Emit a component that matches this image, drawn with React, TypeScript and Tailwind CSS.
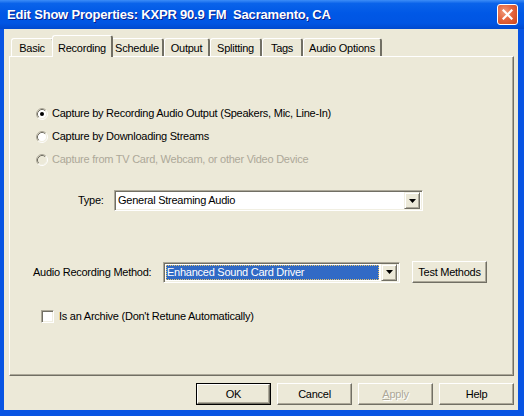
import React from "react";

function Radio({ checked, disabled }: { checked?: boolean; disabled?: boolean }) {
  return (
    <svg width="12" height="12" viewBox="0 0 12 12" className="shrink-0">
      <circle cx="6" cy="6" r="4.5" fill={disabled ? "#ECE9D8" : "#FFFFFF"} />
      <path d="M2.11 9.89 A5.5 5.5 0 0 1 9.89 2.11" stroke="#ACA899" strokeWidth="1" fill="none" />
      <path d="M9.89 2.11 A5.5 5.5 0 0 1 2.11 9.89" stroke="#FFFFFF" strokeWidth="1" fill="none" />
      <path d="M2.82 9.18 A4.5 4.5 0 0 1 9.18 2.82" stroke="#716F64" strokeWidth="1" fill="none" />
      <path d="M9.18 2.82 A4.5 4.5 0 0 1 2.82 9.18" stroke="#F1EFE2" strokeWidth="1" fill="none" />
      {checked && <circle cx="6" cy="6" r="2" fill="#000000" />}
    </svg>
  );
}

function Arrow() {
  return (
    <div className="w-[16px] h-[17px] bg-[#ECE9D8] border border-t-[#F1EFE2] border-l-[#F1EFE2] border-r-[#716F64] border-b-[#716F64] shadow-[inset_1px_1px_0_#FFFFFF,inset_-1px_-1px_0_#ACA899] flex items-center justify-center">
      <svg width="7" height="4" viewBox="0 0 7 4">
        <path d="M0 0 H7 L3.5 4 Z" fill="#000" />
      </svg>
    </div>
  );
}

function Btn({ label, def, disabled, w = "w-[75px]" }: { label: React.ReactNode; def?: boolean; disabled?: boolean; w?: string }) {
  const inner = (
    <div className="h-full w-full bg-[#ECE9D8] border border-t-white border-l-white border-r-[#716F64] border-b-[#716F64] shadow-[inset_-1px_-1px_0_#ACA899] flex items-center justify-center">
      <span className={disabled ? "text-[#ACA899] [text-shadow:1px_1px_0_#fff]" : "text-black"}>{label}</span>
    </div>
  );
  return def ? (
    <div className={`${w} h-[22px] border border-black`}>{inner}</div>
  ) : (
    <div className={`${w} h-[22px]`}>{inner}</div>
  );
}

const tabs = [
  { label: "Basic", w: "w-[43px]" },
  { label: "Recording", w: "w-[61px]", sel: true },
  { label: "Schedule", w: "w-[53px]" },
  { label: "Output", w: "w-[46px]" },
  { label: "Splitting", w: "w-[52px]" },
  { label: "Tags", w: "w-[41px]" },
  { label: "Audio Options", w: "w-[79px]" },
];

export default function App() {
  return (
    <div className="w-[524px] h-[416px] bg-[#0854E3] flex flex-col font-['Liberation_Sans',Arial,sans-serif] text-[11px] tracking-[-0.25px] text-black overflow-hidden select-none">
      {/* Title bar */}
      <div className="h-[29px] shrink-0 flex items-center pl-[7px] pr-[6px] bg-[linear-gradient(to_bottom,#3D8DF7_0%,#0A63EA_12%,#0058E6_45%,#0055E3_80%,#0049CF_100%)]">
        <span className="text-white font-bold text-[13px] tracking-[-0.2px] [text-shadow:1px_1px_0_#0A1E8C] whitespace-pre">
          Edit Show Properties: KXPR 90.9 FM  Sacramento, CA
        </span>
        <div className="ml-auto w-[21px] h-[21px] rounded-[3px] border border-white bg-[radial-gradient(circle_at_35%_35%,#F09A7A_0%,#E4653F_45%,#CC4419_100%)] flex items-center justify-center">
          <svg width="11" height="11" viewBox="0 0 11 11">
            <path d="M1.5 1.5 L9.5 9.5 M9.5 1.5 L1.5 9.5" stroke="#FFFFFF" strokeWidth="2.2" strokeLinecap="square" />
          </svg>
        </div>
      </div>

      {/* Body */}
      <div className="flex-1 ml-[4px] mr-[6px] mb-[6px] bg-[#ECE9D8] flex flex-col">
        {/* Tabs */}
        <div className="h-[27px] pt-[6px] pl-[5px] flex items-end">
          <div className="w-[2px]" />
          {tabs.map((t) =>
            t.sel ? (
              <div
                key={t.label}
                className={`${t.w} h-[22px] -mb-px relative z-10 -ml-[2px] -mr-[2px] bg-[#ECE9D8] border-l border-t border-white border-r-2 border-r-[#716F64] rounded-t-[3px] flex justify-center pt-[4px]`}
              >
                {t.label}
              </div>
            ) : (
              <div
                key={t.label}
                className={`${t.w} h-[18px] bg-[#ECE9D8] border-l border-t border-white border-r-2 border-r-[#716F64] rounded-t-[3px] flex items-center justify-center pt-[1px]`}
              >
                {t.label}
              </div>
            )
          )}
        </div>

        {/* Panel */}
        <div className="h-[320px] ml-[5px] mr-[4px] border border-t-white border-l-white border-r-[#716F64] border-b-[#716F64] shadow-[inset_-1px_-1px_0_#ACA899] flex flex-col">
          <div className="h-[45px]" />
          <div className="flex flex-col pl-[26px]">
            <div className="h-[23px] flex items-center gap-[4px]">
              <Radio checked />
              <span>Capture by Recording Audio Output (Speakers, Mic, Line-In)</span>
            </div>
            <div className="h-[23px] flex items-center gap-[4px]">
              <Radio />
              <span>Capture by Downloading Streams</span>
            </div>
            <div className="h-[23px] flex items-center gap-[4px]">
              <Radio disabled />
              <span className="text-[#ACA899]">Capture from TV Card, Webcam, or other Video Device</span>
            </div>
          </div>

          <div className="mt-[19px] flex items-center pl-[68px]">
            <span className="w-[36px]">Type:</span>
            <div className="w-[309px] h-[21px] bg-white border border-t-[#ACA899] border-l-[#ACA899] border-r-white border-b-white shadow-[inset_1px_1px_0_#716F64,inset_-1px_-1px_0_#F1EFE2] flex items-center pl-[3px] pr-[2px]">
              <span className="flex-1">General Streaming Audio</span>
              <Arrow />
            </div>
          </div>

          <div className="mt-[50px] flex items-center pl-[23px]">
            <span className="w-[130px]">Audio Recording Method:</span>
            <div className="w-[237px] h-[21px] bg-white border border-t-[#ACA899] border-l-[#ACA899] border-r-white border-b-white shadow-[inset_1px_1px_0_#716F64,inset_-1px_-1px_0_#F1EFE2] flex items-center pl-[2px] pr-[2px] gap-[2px]">
              <div className="flex-1 h-[15px] bg-[#316AC5] text-white outline outline-1 outline-dotted outline-[#E6C36A] -outline-offset-1 flex items-center pl-[1px]">
                Enhanced Sound Card Driver
              </div>
              <Arrow />
            </div>
            <div className="ml-[12px]">
              <Btn label="Test Methods" />
            </div>
          </div>

          <div className="mt-[25px] flex items-center pl-[31px] gap-[5px]">
            <div className="w-[13px] h-[13px] bg-white border border-t-[#ACA899] border-l-[#ACA899] border-r-white border-b-white shadow-[inset_1px_1px_0_#716F64,inset_-1px_-1px_0_#F1EFE2]" />
            <span>Is an Archive (Don't Retune Automatically)</span>
          </div>
        </div>

        {/* Buttons */}
        <div className="mt-[7px] mr-[4px] flex justify-end gap-[6px]">
          <Btn label="OK" def />
          <Btn label="Cancel" />
          <Btn label={<><span className="underline">A</span>pply</>} disabled />
          <Btn label="Help" />
        </div>
      </div>
    </div>
  );
}
